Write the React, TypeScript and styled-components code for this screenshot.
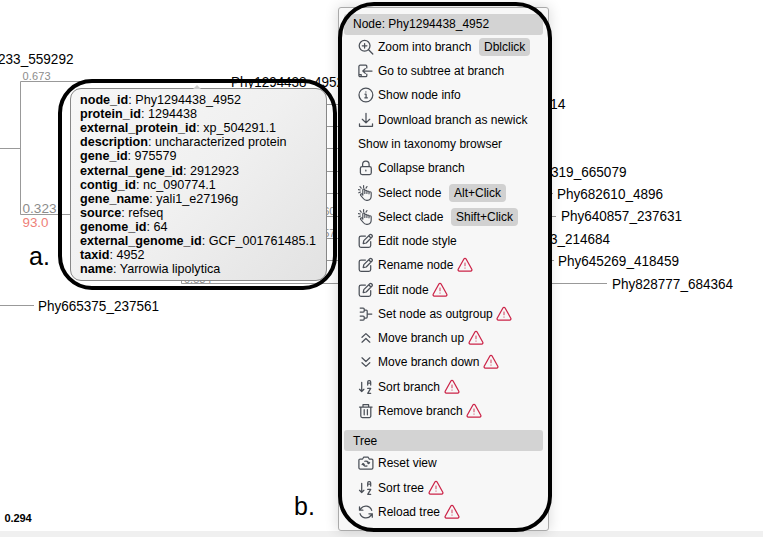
import React from "react";
import styled, { createGlobalStyle } from "styled-components";

const GlobalStyle = createGlobalStyle`
  * { box-sizing: border-box; }
  body { margin: 0; background: #fff; font-family: "Liberation Sans", Arial, sans-serif; color: #000; }
`;

const Stage = styled.main`
  position: relative;
  width: 763px;
  height: 537px;
  overflow: hidden;
  background: #fff;
`;

const TreeCanvas = styled.svg`
  display: block;
  width: 763px;
  height: 537px;
  font-family: "Liberation Sans", Arial, sans-serif;
`;

const Tooltip = styled.section`
  position: absolute;
  left: 70px;
  top: 88px;
  width: 257px;
  height: 193px;
  padding: 4.3px 9px;
  border: 1px solid #888;
  border-radius: 11px;
  background: linear-gradient(135deg, #f7f7f7, #f0f0f0 50%, #e2e2e2);
  font-size: 12.6px;
  line-height: 14.06px;
  white-space: nowrap;
`;

const TooltipArrow = styled.span`
  position: absolute;
  left: 122px;
  top: -4px;
  border: 4px solid transparent;
  border-top: 0;
  border-bottom-color: #ccc;
`;

const Field = styled.div`
  height: 14.06px;
`;

const Menu = styled.nav`
  position: absolute;
  left: 338px;
  top: 7px;
  width: 211px;
  height: 524px;
  padding: 6px 5px;
  border: 1px solid #aaa;
  border-radius: 3px;
  background: #f7f7f7;
  box-shadow: 0 0 14px rgba(0, 0, 0, 0.16);
  font-size: 12px;
  white-space: nowrap;
`;

const Heading = styled.h2<{ $gap?: number }>`
  display: flex;
  align-items: center;
  height: 20.8px;
  margin: ${(p) => p.$gap ?? 0}px 0 0;
  padding-left: 9px;
  border-radius: 3px;
  background: #d3d3d3;
  font-size: 12px;
  font-weight: 400;
`;

const Row = styled.div`
  display: flex;
  align-items: center;
  height: 24.28px;
  padding-left: 14px;
`;

const Glyph = styled.svg<{ $warn?: boolean }>`
  flex: none;
  width: 16px;
  height: 16px;
  margin: ${(p) => (p.$warn ? "0 0 0 4px" : "0 4px 0 0")};
  fill: none;
  stroke: ${(p) => (p.$warn ? "#cc2448" : "#4b5058")};
  stroke-width: 1.25;
  stroke-linecap: round;
  stroke-linejoin: round;
`;

const Label = styled.span<{ $width: number }>`
  width: ${(p) => p.$width}px;
`;

const Key = styled.kbd`
  margin-left: 8px;
  padding: 0 5px;
  height: 18px;
  border-radius: 4px;
  background: #d1d1d1;
  font: 12px/18px "Liberation Sans", Arial, sans-serif;
`;

const Outline = styled.div<{ $x: number; $y: number; $w: number; $h: number; $r: number }>`
  position: absolute;
  left: ${(p) => p.$x}px;
  top: ${(p) => p.$y}px;
  width: ${(p) => p.$w}px;
  height: ${(p) => p.$h}px;
  border: 4px solid #000;
  border-radius: ${(p) => p.$r}px;
  pointer-events: none;
`;

const StatusStrip = styled.div`
  position: absolute;
  left: 0;
  bottom: 0;
  width: 100%;
  height: 6px;
  background: #f0f0f0;
`;

const icons: Record<string, React.ReactNode> = {
  zoom: <><circle cx="6.6" cy="6.8" r="5.4" /><path d="M10.6 10.8l4.2 4.2M6.6 4.5v4.6M4.3 6.8h4.6" /></>,
  enter: <path d="M8.8 4.9V3.2a1 1 0 0 0-1-1H2.2a1.3 1.3 0 0 0-1.3 1.3v8.9a1.3 1.3 0 0 0 1.3 1.3h5.6a1 1 0 0 0 1-1V11M1.1 11.6h2.1v2M14 8H4.8M7.3 5.6L4.8 8l2.5 2.4" />,
  info: <><circle cx="7.9" cy="8" r="6.9" /><path d="M7 7.2h1.1v3.5M6.8 10.8h2.6M7.9 4.8v.3" /></>,
  download: <path d="M8 1.3v9.4M4.3 7.3L8 10.9l3.7-3.6M1.5 11.8v2.5h13v-2.5" />,
  lock: <><rect x="2.4" y="6.5" width="10.9" height="8" rx="1.8" /><path d="M4.6 6.3V4.4a3.25 3.25 0 0 1 6.5 0v1.9M7.85 10.1v.8" /></>,
  tap: <path strokeWidth="1.15" d="M4.8 10.2V4.9a1 1 0 0 1 2 0v3.6M6.8 7.8V6.3a1 1 0 0 1 2.1 0v2.1M8.9 7a1 1 0 0 1 2.1 0v1.8M11 7.8a1.1 1.1 0 0 1 2.2 0v3.3c0 2.8-1.3 4.2-3.9 4.2H8.6c-1.6 0-2.5-.7-3.3-1.8l-2.6-3.1c-.8-1.1.7-2.1 1.6-1.2l.5 1M.8 7.8l1.6-.8M.4 4.6l1.9.4M2 1.5l1.2 1.7M5.6.6v1.8M9 1.5L8 3.1" />,
  edit: <path d="M7.4 3H3a1.8 1.8 0 0 0-1.8 1.8v7.8A1.8 1.8 0 0 0 3 14.4h7.9a1.8 1.8 0 0 0 1.8-1.8V8.7M5.2 10.7l.6-3.1 6-5.8a1.2 1.2 0 0 1 1.7 0l.5.5a1.2 1.2 0 0 1 0 1.7l-5.8 6zM10.9 3l2.1 2" />,
  outgroup: <path d="M2.2 2h3a1 1 0 0 1 1 1v2a1 1 0 0 1-1 1h-3M2.2 10h3a1 1 0 0 1 1 1v2a1 1 0 0 1-1 1h-3M6.2 4h2a1 1 0 0 1 1 1v6a1 1 0 0 1-1 1h-2M9.2 8h4.6" />,
  up: <path d="M4 7.3L7.9 3.6l3.9 3.7M4 12.2l3.9-3.7 3.9 3.7" />,
  down: <path d="M4 3.8l3.9 3.7 3.9-3.7M4 8.7l3.9 3.7 3.9-3.7" />,
  sort: <path d="M3.7 3.3v9.2M1.5 10.3l2.2 2.2 2.2-2.2M9.7 6V2.9a1.3 1.3 0 0 1 1.3-1.3h.4a1.3 1.3 0 0 1 1.3 1.3V6M9.7 4.2h3M9.7 9.4h3l-3 4.9h3" />,
  trash: <path d="M1.5 4h12.6M5 3.8V1.7h5.6v2.1M2.8 4v9.1a1.5 1.5 0 0 0 1.5 1.5h7a1.5 1.5 0 0 0 1.5-1.5V4M6.2 6.7v5.1M9.4 6.7v5.1" />,
  camera: <><path d="M2.2 4h2.4L5.8 2h4.2l1.2 2h2.4A1.3 1.3 0 0 1 14.9 5.3v7.4a1.3 1.3 0 0 1-1.3 1.3H2.2a1.3 1.3 0 0 1-1.3-1.3V5.3A1.3 1.3 0 0 1 2.2 4" /><path d="M5.1 8.9a2.8 2.8 0 0 0 3.9 2M10.7 8.3a2.8 2.8 0 0 0-3.9-2M4.1 9.6l1-1.1 1.2.9M11.6 7.5l-.9 1.2-1.3-.9" /></>,
  reload: <path d="M13.7 6.4A6.2 6.2 0 0 0 2.9 4.5L1.5 6.2M1.5 2.8v3.4h3.4M2.1 9.7a6.2 6.2 0 0 0 10.8 1.8l1.4-1.7M14.3 13.2V9.8h-3.4" />,
};

const Warning = () => (
  <Glyph $warn viewBox="0 0 16 16">
    <path d="M6.9 2L1.2 12.2A1.2 1.2 0 0 0 2.3 14h11.4a1.2 1.2 0 0 0 1.1-1.8L9.1 2a1.25 1.25 0 0 0-2.2 0z" />
    <path strokeWidth="0.9" d="M8 6v2.8M8 11v.2" />
  </Glyph>
);

type Item = { icon?: string; label: string; width: number; shortcut?: string; warn?: boolean };

const nodeItems: Item[] = [
  { icon: "zoom", label: "Zoom into branch", width: 93, shortcut: "Dblclick" },
  { icon: "enter", label: "Go to subtree at branch", width: 126 },
  { icon: "info", label: "Show node info", width: 83 },
  { icon: "download", label: "Download branch as newick", width: 149 },
  { label: "Show in taxonomy browser", width: 144 },
  { icon: "lock", label: "Collapse branch", width: 87 },
  { icon: "tap", label: "Select node", width: 63, shortcut: "Alt+Click" },
  { icon: "tap", label: "Select clade", width: 65, shortcut: "Shift+Click" },
  { icon: "edit", label: "Edit node style", width: 79 },
  { icon: "edit", label: "Rename node", width: 75, warn: true },
  { icon: "edit", label: "Edit node", width: 50, warn: true },
  { icon: "outgroup", label: "Set node as outgroup", width: 114, warn: true },
  { icon: "up", label: "Move branch up", width: 86, warn: true },
  { icon: "down", label: "Move branch down", width: 101, warn: true },
  { icon: "sort", label: "Sort branch", width: 62, warn: true },
  { icon: "trash", label: "Remove branch", width: 84, warn: true },
];

const treeItems: Item[] = [
  { icon: "camera", label: "Reset view", width: 59 },
  { icon: "sort", label: "Sort tree", width: 46, warn: true },
  { icon: "reload", label: "Reload tree", width: 62, warn: true },
];

const MenuRow = ({ item }: { item: Item }) => (
  <Row>
    {item.icon && <Glyph viewBox="0 0 16 16">{icons[item.icon]}</Glyph>}
    <Label $width={item.width}>{item.label}</Label>
    {item.shortcut && <Key>{item.shortcut}</Key>}
    {item.warn && <Warning />}
  </Row>
);

const fields: [string, string][] = [
  ["node_id", "Phy1294438_4952"],
  ["protein_id", "1294438"],
  ["external_protein_id", "xp_504291.1"],
  ["description", "uncharacterized protein"],
  ["gene_id", "975579"],
  ["external_gene_id", "2912923"],
  ["contig_id", "nc_090774.1"],
  ["gene_name", "yali1_e27196g"],
  ["source", "refseq"],
  ["genome_id", "64"],
  ["external_genome_id", "GCF_001761485.1"],
  ["taxid", "4952"],
  ["name", "Yarrowia lipolytica"],
];

const leaves = [
  { text: "233_559292", x: -2, y: 64, w: 75.5 },
  { text: "Phy1294438_4952", x: 231, y: 87, w: 113 },
  { text: "14", x: 550, y: 109, w: 15.5 },
  { text: "319_665079", x: 551, y: 177, w: 75.5 },
  { text: "Phy682610_4896", x: 557, y: 199, w: 106 },
  { text: "Phy640857_237631", x: 561, y: 221, w: 121 },
  { text: "3_214684", x: 550, y: 244, w: 60 },
  { text: "Phy645269_418459", x: 558, y: 266, w: 121 },
  { text: "Phy828777_684364", x: 612, y: 289, w: 121 },
  { text: "Phy665375_237561", x: 38, y: 311, w: 121 },
];

export default function App() {
  return (
    <>
      <GlobalStyle />
      <Stage>
        <TreeCanvas viewBox="0 0 763 537">
          <path
            d="M0 148.5H20.5M70 81.5H20.5V214.5H72M70 81.5H230M0 305.5H34M181.5 278V283.5H607M320 104.5H345M320 126.5H345M320 148.5H345M320 171.5H345M320 193.5H345M320 216.5H345M320 238.5H345M320 260.5H345M545 193.5H553M545 216.5H556M545 260.5H554"
            fill="none"
            stroke="#999"
          />
          <g fontSize="14">
            {leaves.map((l) => (
              <text key={l.text} x={l.x} y={l.y} textLength={l.w} lengthAdjust="spacingAndGlyphs">{l.text}</text>
            ))}
          </g>
          <g fill="#8c8c8c" fontSize="11">
            <text x="22.5" y="80" textLength="28">0.673</text>
            <text x="22.5" y="212.5" fontSize="13" textLength="34" lengthAdjust="spacingAndGlyphs">0.323</text>
            <text x="184" y="283">0.534</text>
            <text x="314" y="215">0.60</text>
            <text x="314" y="237">0.57</text>
          </g>
          <text x="22.5" y="227" fontSize="13" fill="#ee8078" textLength="26" lengthAdjust="spacingAndGlyphs">93.0</text>
          <text x="29" y="265" fontSize="25" textLength="21">a.</text>
          <text x="294" y="515" fontSize="25" textLength="21">b.</text>
          <text x="4.5" y="522" fontSize="11" fontWeight="700" textLength="27">0.294</text>
        </TreeCanvas>
        <StatusStrip />
        <Tooltip>
          <TooltipArrow />
          {fields.map(([name, value]) => (
            <Field key={name}>
              <b>{name}</b>: {value}
            </Field>
          ))}
        </Tooltip>
        <Menu>
          <Heading>Node: Phy1294438_4952</Heading>
          {nodeItems.map((item) => <MenuRow key={item.label} item={item} />)}
          <Heading $gap={7.4}>Tree</Heading>
          {treeItems.map((item) => <MenuRow key={item.label} item={item} />)}
        </Menu>
        <Outline $x={58} $y={79} $w={279} $h={211} $r={34} />
        <Outline $x={338} $y={2} $w={214} $h={530} $r={36} />
      </Stage>
    </>
  );
}
